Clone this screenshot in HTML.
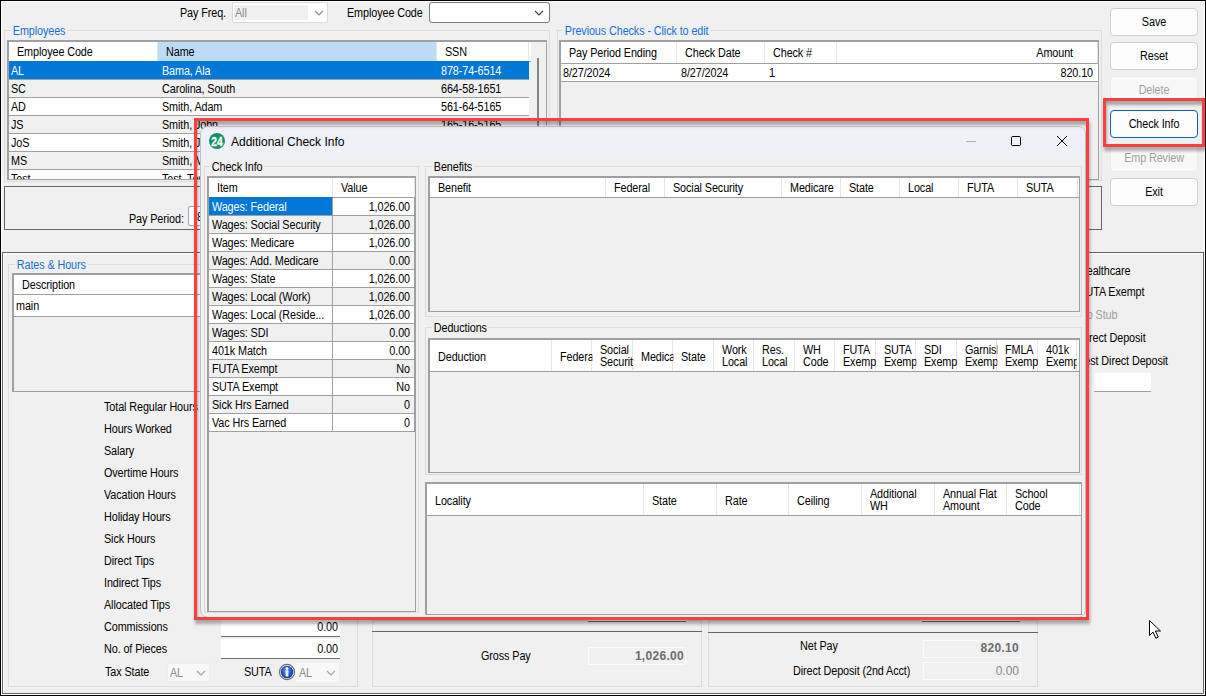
<!DOCTYPE html><html><head><meta charset="utf-8"><style>
*{margin:0;padding:0;box-sizing:border-box}
html,body{width:1206px;height:696px;overflow:hidden;background:#f0f0f0}
body{position:relative;font-family:"Liberation Sans",sans-serif;font-size:11px;color:#000}
.t{position:absolute;white-space:nowrap;line-height:13px;font-size:12px;letter-spacing:-0.1px;transform:scaleX(0.9);transform-origin:0 0}
.tr{transform-origin:100% 0}
.tc{transform-origin:50% 0}
.nt{transform:none}
.b{position:absolute}
.ib{position:absolute;overflow:hidden}
</style></head><body><!-- frame -->
<div class="b" style="left:0px;top:0px;width:1206px;height:696px;border:1px solid #000;"></div>
<div class="b" style="left:1px;top:1px;width:1204px;height:694px;border:1px solid #fff;"></div>
<div class="t " style="left:180px;top:7px;">Pay Freq.</div>
<div class="b" style="left:232px;top:2px;width:96px;height:21px;border:1px solid #d9d9d9;background:#fff;border-radius:2px"></div>
<div class="b" style="left:234px;top:5px;width:74px;height:15px;background:#f0f0f0"></div>
<div class="t " style="left:235px;top:7px;color:#8a8a8a">All</div>
<svg class="b" style="left:314px;top:10px" width="12" height="8"><path d="M1 1 L5 5 L9 1" fill="none" stroke="#8a8a8a" stroke-width="1.1"/></svg>
<div class="t " style="left:347px;top:7px;">Employee Code</div>
<div class="b" style="left:429px;top:2px;width:121px;height:21px;border:1px solid #7a7a7a;background:#fff;border-radius:3px"></div>
<svg class="b" style="left:534px;top:10px" width="12" height="8"><path d="M1 1 L5 5 L9 1" fill="none" stroke="#404040" stroke-width="1.1"/></svg>
<div class="b" style="left:4px;top:30px;width:546px;height:152px;border:1px solid #dcdcdc;"></div>
<div class="t" style="left:11px;top:25px;padding:0 2px;background:#f0f0f0;color:#1a6fd6">Employees</div>
<div class="ib" style="left:7px;top:40px;width:540px;height:140px;border-top:2px solid #a0a0a4;border-left:2px solid #a0a0a4;border-right:1px solid #a0a0a4;border-bottom:1px solid #a0a0a4;background:#f0f0f0">
<div class="b" style="left:0;top:0;width:540px;height:20px;background:#fff;border-bottom:1px solid #a0a0a0"></div>
<div class="b" style="left:148px;top:0;width:1px;height:19px;background:#e5e5e5"></div>
<div class="t" style="left:8px;top:4px;width:156.67px;overflow:hidden">Employee Code</div>
<div class="b" style="left:149px;top:0;width:279px;height:19px;background:#bcdcf4"></div>
<div class="b" style="left:427px;top:0;width:1px;height:19px;background:#e5e5e5"></div>
<div class="t" style="left:157px;top:4px;width:301.11px;overflow:hidden">Name</div>
<div class="b" style="left:519px;top:0;width:1px;height:19px;background:#e5e5e5"></div>
<div class="t" style="left:436px;top:4px;width:93.33px;overflow:hidden">SSN</div>
<div class="b" style="left:0;top:20px;width:520px;height:18px;background:#fff;border-bottom:1px solid #a0a0a0"></div>
<div class="b" style="left:0px;top:19px;width:149px;height:18px;background:#0078d7"></div>
<div class="t" style="left:2px;top:23px;width:161.11px;overflow:hidden;color:#fff">AL</div>
<div class="b" style="left:149px;top:19px;width:279px;height:18px;background:#0078d7"></div>
<div class="t" style="left:153px;top:23px;width:303.33px;overflow:hidden;color:#fff">Bama, Ala</div>
<div class="b" style="left:428px;top:19px;width:92px;height:18px;background:#0078d7"></div>
<div class="t" style="left:432px;top:23px;width:95.56px;overflow:hidden;color:#fff">878-74-6514</div>
<div class="b" style="left:0;top:38px;width:520px;height:18px;background:#f0f0f0;border-bottom:1px solid #a0a0a0"></div>
<div class="t" style="left:2px;top:41px;width:161.11px;overflow:hidden;color:#000">SC</div>
<div class="t" style="left:153px;top:41px;width:303.33px;overflow:hidden;color:#000">Carolina, South</div>
<div class="t" style="left:432px;top:41px;width:95.56px;overflow:hidden;color:#000">664-58-1651</div>
<div class="b" style="left:0;top:56px;width:520px;height:18px;background:#fff;border-bottom:1px solid #a0a0a0"></div>
<div class="t" style="left:2px;top:59px;width:161.11px;overflow:hidden;color:#000">AD</div>
<div class="t" style="left:153px;top:59px;width:303.33px;overflow:hidden;color:#000">Smith, Adam</div>
<div class="t" style="left:432px;top:59px;width:95.56px;overflow:hidden;color:#000">561-64-5165</div>
<div class="b" style="left:0;top:74px;width:520px;height:18px;background:#f0f0f0;border-bottom:1px solid #a0a0a0"></div>
<div class="t" style="left:2px;top:77px;width:161.11px;overflow:hidden;color:#000">JS</div>
<div class="t" style="left:153px;top:77px;width:303.33px;overflow:hidden;color:#000">Smith, John</div>
<div class="t" style="left:432px;top:77px;width:95.56px;overflow:hidden;color:#000">165-16-5165</div>
<div class="b" style="left:0;top:92px;width:520px;height:18px;background:#fff;border-bottom:1px solid #a0a0a0"></div>
<div class="t" style="left:2px;top:95px;width:161.11px;overflow:hidden;color:#000">JoS</div>
<div class="t" style="left:153px;top:95px;width:303.33px;overflow:hidden;color:#000">Smith, John</div>
<div class="t" style="left:432px;top:95px;width:95.56px;overflow:hidden;color:#000">165-16-5165</div>
<div class="b" style="left:0;top:110px;width:520px;height:18px;background:#f0f0f0;border-bottom:1px solid #a0a0a0"></div>
<div class="t" style="left:2px;top:113px;width:161.11px;overflow:hidden;color:#000">MS</div>
<div class="t" style="left:153px;top:113px;width:303.33px;overflow:hidden;color:#000">Smith, Mary</div>
<div class="t" style="left:432px;top:113px;width:95.56px;overflow:hidden;color:#000">165-16-5165</div>
<div class="b" style="left:0;top:128px;width:520px;height:18px;background:#fff;border-bottom:1px solid #a0a0a0"></div>
<div class="t" style="left:2px;top:131px;width:161.11px;overflow:hidden;color:#000">Test</div>
<div class="t" style="left:153px;top:131px;width:303.33px;overflow:hidden;color:#000">Test, Test</div>
<div class="t" style="left:432px;top:131px;width:95.56px;overflow:hidden;color:#000">165-16-5165</div>
</div>
<div class="b" style="left:531px;top:42px;width:15px;height:138px;background:#f0f0f0"></div>
<div class="b" style="left:537px;top:58px;width:2px;height:122px;background:#858585"></div>
<div class="b" style="left:557px;top:30px;width:545px;height:151px;border:1px solid #dcdcdc;"></div>
<div class="t" style="left:563px;top:25px;padding:0 2px;background:#f0f0f0;color:#1a6fd6">Previous Checks - Click to edit</div>
<div class="ib" style="left:559px;top:40px;width:540px;height:140px;border-top:2px solid #a0a0a4;border-left:2px solid #a0a0a4;border-right:1px solid #a0a0a4;border-bottom:1px solid #a0a0a4;background:#f0f0f0">
<div class="b" style="left:0;top:0;width:540px;height:22px;background:#fff;border-bottom:1px solid #a0a0a0"></div>
<div class="b" style="left:115px;top:0;width:1px;height:21px;background:#e5e5e5"></div>
<div class="t" style="left:8px;top:5px;width:120.00px;overflow:hidden">Pay Period Ending</div>
<div class="b" style="left:203px;top:0;width:1px;height:21px;background:#e5e5e5"></div>
<div class="t" style="left:124px;top:5px;width:88.89px;overflow:hidden">Check Date</div>
<div class="b" style="left:275px;top:0;width:1px;height:21px;background:#e5e5e5"></div>
<div class="t" style="left:212px;top:5px;width:71.11px;overflow:hidden">Check #</div>
<div class="b" style="left:536px;top:0;width:1px;height:21px;background:#e5e5e5"></div>
<div class="t tr" style="left:276px;top:5px;width:236px;text-align:right">Amount</div>
<div class="b" style="left:0;top:22px;width:537px;height:18px;background:#fff;border-bottom:1px solid #a0a0a0"></div>
<div class="t" style="left:2px;top:25px;width:124.44px;overflow:hidden;color:#000">8/27/2024</div>
<div class="t" style="left:120px;top:25px;width:91.11px;overflow:hidden;color:#000">8/27/2024</div>
<div class="t" style="left:208px;top:25px;width:73.33px;overflow:hidden;color:#000">1</div>
<div class="t tr" style="left:276px;top:25px;width:256px;text-align:right;color:#000">820.10</div>
</div>
<div class="b" style="left:1110px;top:8px;width:88px;height:28px;border:1px solid #d0d0d0;border-radius:4px;background:#fdfdfd"></div>
<div class="t tc" style="left:1110px;top:16px;width:88px;text-align:center">Save</div>
<div class="b" style="left:1110px;top:42px;width:88px;height:28px;border:1px solid #d0d0d0;border-radius:4px;background:#fdfdfd"></div>
<div class="t tc" style="left:1110px;top:50px;width:88px;text-align:center">Reset</div>
<div class="b" style="left:1110px;top:76px;width:88px;height:28px;border:1px solid #ebebeb;border-radius:4px;background:#f8f8f8"></div>
<div class="t tc" style="left:1110px;top:84px;width:88px;text-align:center;color:#a0a0a0">Delete</div>
<div class="b" style="left:1110px;top:110px;width:88px;height:28px;border:1.5px solid #0067c0;border-radius:4px;background:#fdfdfd"></div>
<div class="t tc" style="left:1110px;top:118px;width:88px;text-align:center">Check Info</div>
<div class="b" style="left:1110px;top:144px;width:88px;height:28px;border:1px solid #ebebeb;border-radius:4px;background:#f8f8f8"></div>
<div class="t tc" style="left:1110px;top:152px;width:88px;text-align:center;color:#a0a0a0">Emp Review</div>
<div class="b" style="left:1110px;top:178px;width:88px;height:28px;border:1px solid #d0d0d0;border-radius:4px;background:#fdfdfd"></div>
<div class="t tc" style="left:1110px;top:186px;width:88px;text-align:center">Exit</div>
<div class="b" style="left:4px;top:186px;width:1098px;height:44px;border:1px solid #646464;"></div>
<div class="t " style="left:129px;top:213px;">Pay Period:</div>
<div class="b" style="left:188px;top:206px;width:120px;height:20px;border:1px solid #a8a8a8;background:#fff;border-radius:2px"></div>
<div class="t " style="left:197px;top:211px;">8/27/2024</div>
<div class="b" style="left:2px;top:252px;width:1202px;height:442px;border:1px solid #646464;box-shadow:inset 1px 1px 0 #fff;"></div>
<div class="b" style="left:8px;top:264px;width:350px;height:423px;border:1px solid #dcdcdc;"></div>
<div class="t" style="left:15px;top:259px;padding:0 2px;background:#f0f0f0;color:#1a6fd6">Rates &amp; Hours</div>
<div class="ib" style="left:12px;top:273px;width:340px;height:119px;border-top:2px solid #a0a0a4;border-left:2px solid #a0a0a4;border-right:1px solid #a0a0a4;border-bottom:1px solid #a0a0a4;background:#f0f0f0">
<div class="b" style="left:0;top:0;width:340px;height:20px;background:#fff;border-bottom:1px solid #a0a0a0"></div>
<div class="b" style="left:339px;top:0;width:1px;height:19px;background:#e5e5e5"></div>
<div class="t" style="left:8px;top:4px;width:368.89px;overflow:hidden">Description</div>
<div class="b" style="left:0;top:20px;width:340px;height:22px;background:#fff;border-bottom:1px solid #a0a0a0"></div>
<div class="t" style="left:2px;top:25px;width:373.33px;overflow:hidden;color:#000">main</div>
</div>
<div class="t " style="left:104px;top:401px;">Total Regular Hours</div>
<div class="t " style="left:104px;top:423px;">Hours Worked</div>
<div class="t " style="left:104px;top:445px;">Salary</div>
<div class="t " style="left:104px;top:467px;">Overtime Hours</div>
<div class="t " style="left:104px;top:489px;">Vacation Hours</div>
<div class="t " style="left:104px;top:511px;">Holiday Hours</div>
<div class="t " style="left:104px;top:533px;">Sick Hours</div>
<div class="t " style="left:104px;top:555px;">Direct Tips</div>
<div class="t " style="left:104px;top:577px;">Indirect Tips</div>
<div class="t " style="left:104px;top:599px;">Allocated Tips</div>
<div class="t " style="left:104px;top:621px;">Commissions</div>
<div class="t " style="left:104px;top:643px;">No. of Pieces</div>
<div class="b" style="left:221px;top:397px;width:119px;height:20px;background:#fff;border-bottom:1px solid #6e6e6e"></div>
<div class="t tr " style="right:868px;top:401px;">0.00</div>
<div class="b" style="left:221px;top:419px;width:119px;height:20px;background:#fff;border-bottom:1px solid #6e6e6e"></div>
<div class="t tr " style="right:868px;top:423px;">0.00</div>
<div class="b" style="left:221px;top:441px;width:119px;height:20px;background:#fff;border-bottom:1px solid #6e6e6e"></div>
<div class="t tr " style="right:868px;top:445px;">0.00</div>
<div class="b" style="left:221px;top:463px;width:119px;height:20px;background:#fff;border-bottom:1px solid #6e6e6e"></div>
<div class="t tr " style="right:868px;top:467px;">0.00</div>
<div class="b" style="left:221px;top:485px;width:119px;height:20px;background:#fff;border-bottom:1px solid #6e6e6e"></div>
<div class="t tr " style="right:868px;top:489px;">0.00</div>
<div class="b" style="left:221px;top:507px;width:119px;height:20px;background:#fff;border-bottom:1px solid #6e6e6e"></div>
<div class="t tr " style="right:868px;top:511px;">0.00</div>
<div class="b" style="left:221px;top:529px;width:119px;height:20px;background:#fff;border-bottom:1px solid #6e6e6e"></div>
<div class="t tr " style="right:868px;top:533px;">0.00</div>
<div class="b" style="left:221px;top:551px;width:119px;height:20px;background:#fff;border-bottom:1px solid #6e6e6e"></div>
<div class="t tr " style="right:868px;top:555px;">0.00</div>
<div class="b" style="left:221px;top:573px;width:119px;height:20px;background:#fff;border-bottom:1px solid #6e6e6e"></div>
<div class="t tr " style="right:868px;top:577px;">0.00</div>
<div class="b" style="left:221px;top:595px;width:119px;height:20px;background:#fff;border-bottom:1px solid #6e6e6e"></div>
<div class="t tr " style="right:868px;top:599px;">0.00</div>
<div class="b" style="left:221px;top:617px;width:119px;height:20px;background:#fff;border-bottom:1px solid #6e6e6e"></div>
<div class="t tr " style="right:868px;top:621px;">0.00</div>
<div class="b" style="left:221px;top:639px;width:119px;height:20px;background:#fff;border-bottom:1px solid #6e6e6e"></div>
<div class="t tr " style="right:868px;top:643px;">0.00</div>
<div class="t " style="left:105px;top:666px;">Tax State</div>
<div class="b" style="left:167px;top:663px;width:43px;height:19px;background:#f8f8f8;border:1px solid #ededed"></div>
<div class="t " style="left:170px;top:667px;color:#8a8a8a">AL</div>
<svg class="b" style="left:196px;top:670px" width="12" height="8"><path d="M1 1 L5 5 L9 1" fill="none" stroke="#a0a0a0" stroke-width="1.1"/></svg>
<div class="t " style="left:244px;top:666px;">SUTA</div>
<svg class="b" style="left:278px;top:663px" width="18" height="18"><defs><radialGradient id="ig" cx="45%" cy="40%" r="60%"><stop offset="0" stop-color="#6e9cf0"/><stop offset="0.6" stop-color="#2a58c8"/><stop offset="1" stop-color="#1c3aa0"/></radialGradient></defs><circle cx="9" cy="9" r="7.6" fill="#e8e8e8" stroke="#707070" stroke-width="1.1"/><circle cx="9" cy="9" r="6.3" fill="url(#ig)"/><circle cx="9" cy="5.6" r="1.4" fill="#fff"/><rect x="7.6" y="7.4" width="2.8" height="6" fill="#fff"/></svg>
<div class="b" style="left:296px;top:663px;width:43px;height:19px;background:#f8f8f8"></div>
<div class="t " style="left:299px;top:667px;color:#8a8a8a">AL</div>
<svg class="b" style="left:326px;top:670px" width="12" height="8"><path d="M1 1 L5 5 L9 1" fill="none" stroke="#a0a0a0" stroke-width="1.1"/></svg>
<div class="b" style="left:372px;top:620px;width:330px;height:67px;border:1px solid #dcdcdc;"></div>
<div class="b" style="left:372px;top:631px;width:330px;height:1px;background:#646464"></div>
<div class="b" style="left:588px;top:607px;width:98px;height:15px;background:#fff;border-bottom:1px solid #646464"></div>
<div class="t " style="left:481px;top:650px;">Gross Pay</div>
<div class="b" style="left:588px;top:647px;width:98px;height:18px;border:1px solid #fafafa;background:#f0f0f0"></div>
<div class="t tr " style="right:522px;top:650px;font-weight:bold;color:#6d6d6d;font-size:12px;letter-spacing:0.3px;transform:none">1,026.00</div>
<div class="b" style="left:708px;top:620px;width:330px;height:67px;border:1px solid #dcdcdc;"></div>
<div class="b" style="left:708px;top:632px;width:330px;height:1px;background:#646464"></div>
<div class="b" style="left:922px;top:607px;width:98px;height:15px;background:#fff;border-bottom:1px solid #646464"></div>
<div class="t " style="left:800px;top:640px;">Net Pay</div>
<div class="b" style="left:923px;top:640px;width:98px;height:18px;border:1px solid #fafafa;background:#f0f0f0"></div>
<div class="t tr " style="right:187px;top:642px;font-weight:bold;color:#6d6d6d;font-size:12px;letter-spacing:0.3px;transform:none">820.10</div>
<div class="t " style="left:793px;top:665px;">Direct Deposit (2nd Acct)</div>
<div class="b" style="left:923px;top:662px;width:98px;height:18px;border:1px solid #fafafa;background:#f0f0f0"></div>
<div class="t tr " style="right:187px;top:665px;color:#8a8a8a;font-size:12px;letter-spacing:0;transform:none">0.00</div>
<div class="t " style="left:1079px;top:265px;">Healthcare</div>
<div class="t " style="left:1079px;top:286px;">FUTA Exempt</div>
<div class="t " style="left:1079px;top:309px;color:#a0a0a0">No Stub</div>
<div class="t " style="left:1079px;top:332px;">Direct Deposit</div>
<div class="t " style="left:1079px;top:355px;">Test Direct Deposit</div>
<div class="b" style="left:1094px;top:373px;width:57px;height:19px;background:#fff;border-bottom:1px solid #a0a0a0"></div>
<svg class="b" style="left:1148px;top:619px" width="16" height="22"><path d="M1.5 1.5 L1.5 16.5 L5 13 L7.8 19.2 L10.2 18.2 L7.5 12 L12.5 12 Z" fill="#fff" stroke="#000" stroke-width="1"/></svg>
<div class="ib" style="left:200px;top:126px;width:886px;height:492px;border:1px solid #c4c4c4;border-radius:8px;background:#f0f0f0">
<div class="b" style="left:0;top:0;width:886px;height:30px;background:linear-gradient(#e9eaf0,#eff1f8 4px)"></div>
</div>
<svg class="b" style="left:209px;top:133px" width="16" height="16"><circle cx="8" cy="8" r="8" fill="#11906a"/><text x="2.3" y="12.5" font-family="Liberation Sans" font-size="12.2" font-weight="bold" fill="#fff" stroke="#fff" stroke-width="0.3" textLength="11.4" lengthAdjust="spacingAndGlyphs">24</text></svg>
<div class="t" style="left:231px;top:136px;font-size:12px;letter-spacing:0;transform:none">Additional Check Info</div>
<div class="b" style="left:966px;top:141px;width:10px;height:1px;background:#b0b0b0"></div>
<div class="b" style="left:1011px;top:136px;width:10px;height:10px;border:1px solid #000;border-radius:1.5px"></div>
<svg class="b" style="left:1056px;top:135px" width="12" height="12"><path d="M1 1 L11 11 M11 1 L1 11" stroke="#000" stroke-width="1"/></svg>
<div class="b" style="left:204px;top:166px;width:215px;height:447px;border:1px solid #dcdcdc;"></div>
<div class="t" style="left:210px;top:161px;padding:0 2px;background:#f0f0f0;color:#000">Check Info</div>
<div class="ib" style="left:207px;top:176px;width:209px;height:436px;border-top:2px solid #a0a0a4;border-left:2px solid #a0a0a4;border-right:1px solid #a0a0a4;border-bottom:1px solid #a0a0a4;background:#f0f0f0">
<div class="b" style="left:0;top:0;width:209px;height:20px;background:#fff;border-bottom:1px solid #a0a0a0"></div>
<div class="b" style="left:123px;top:0;width:1px;height:19px;background:#e5e5e5"></div>
<div class="t" style="left:8px;top:4px;width:128.89px;overflow:hidden">Item</div>
<div class="b" style="left:205px;top:0;width:1px;height:19px;background:#e5e5e5"></div>
<div class="t" style="left:132px;top:4px;width:82.22px;overflow:hidden">Value</div>
<div class="b" style="left:0;top:20px;width:206px;height:18px;background:#fff;border-bottom:1px solid #a0a0a0"></div>
<div class="b" style="left:0px;top:19px;width:124px;height:18px;background:#0078d7"></div>
<div class="b" style="left:123px;top:20px;width:1px;height:18px;background:#a0a0a0"></div>
<div class="t" style="left:3px;top:23px;width:132.22px;overflow:hidden;color:#fff">Wages: Federal</div>
<div class="b" style="left:205px;top:20px;width:1px;height:18px;background:#a0a0a0"></div>
<div class="t tr" style="left:124px;top:23px;width:77px;text-align:right;color:#000">1,026.00</div>
<div class="b" style="left:0;top:38px;width:206px;height:18px;background:#f0f0f0;border-bottom:1px solid #a0a0a0"></div>
<div class="b" style="left:123px;top:38px;width:1px;height:18px;background:#a0a0a0"></div>
<div class="t" style="left:3px;top:41px;width:132.22px;overflow:hidden;color:#000">Wages: Social Security</div>
<div class="b" style="left:205px;top:38px;width:1px;height:18px;background:#a0a0a0"></div>
<div class="t tr" style="left:124px;top:41px;width:77px;text-align:right;color:#000">1,026.00</div>
<div class="b" style="left:0;top:56px;width:206px;height:18px;background:#fff;border-bottom:1px solid #a0a0a0"></div>
<div class="b" style="left:123px;top:56px;width:1px;height:18px;background:#a0a0a0"></div>
<div class="t" style="left:3px;top:59px;width:132.22px;overflow:hidden;color:#000">Wages: Medicare</div>
<div class="b" style="left:205px;top:56px;width:1px;height:18px;background:#a0a0a0"></div>
<div class="t tr" style="left:124px;top:59px;width:77px;text-align:right;color:#000">1,026.00</div>
<div class="b" style="left:0;top:74px;width:206px;height:18px;background:#f0f0f0;border-bottom:1px solid #a0a0a0"></div>
<div class="b" style="left:123px;top:74px;width:1px;height:18px;background:#a0a0a0"></div>
<div class="t" style="left:3px;top:77px;width:132.22px;overflow:hidden;color:#000">Wages: Add. Medicare</div>
<div class="b" style="left:205px;top:74px;width:1px;height:18px;background:#a0a0a0"></div>
<div class="t tr" style="left:124px;top:77px;width:77px;text-align:right;color:#000">0.00</div>
<div class="b" style="left:0;top:92px;width:206px;height:18px;background:#fff;border-bottom:1px solid #a0a0a0"></div>
<div class="b" style="left:123px;top:92px;width:1px;height:18px;background:#a0a0a0"></div>
<div class="t" style="left:3px;top:95px;width:132.22px;overflow:hidden;color:#000">Wages: State</div>
<div class="b" style="left:205px;top:92px;width:1px;height:18px;background:#a0a0a0"></div>
<div class="t tr" style="left:124px;top:95px;width:77px;text-align:right;color:#000">1,026.00</div>
<div class="b" style="left:0;top:110px;width:206px;height:18px;background:#f0f0f0;border-bottom:1px solid #a0a0a0"></div>
<div class="b" style="left:123px;top:110px;width:1px;height:18px;background:#a0a0a0"></div>
<div class="t" style="left:3px;top:113px;width:132.22px;overflow:hidden;color:#000">Wages: Local (Work)</div>
<div class="b" style="left:205px;top:110px;width:1px;height:18px;background:#a0a0a0"></div>
<div class="t tr" style="left:124px;top:113px;width:77px;text-align:right;color:#000">1,026.00</div>
<div class="b" style="left:0;top:128px;width:206px;height:18px;background:#fff;border-bottom:1px solid #a0a0a0"></div>
<div class="b" style="left:123px;top:128px;width:1px;height:18px;background:#a0a0a0"></div>
<div class="t" style="left:3px;top:131px;width:132.22px;overflow:hidden;color:#000">Wages: Local (Reside...</div>
<div class="b" style="left:205px;top:128px;width:1px;height:18px;background:#a0a0a0"></div>
<div class="t tr" style="left:124px;top:131px;width:77px;text-align:right;color:#000">1,026.00</div>
<div class="b" style="left:0;top:146px;width:206px;height:18px;background:#f0f0f0;border-bottom:1px solid #a0a0a0"></div>
<div class="b" style="left:123px;top:146px;width:1px;height:18px;background:#a0a0a0"></div>
<div class="t" style="left:3px;top:149px;width:132.22px;overflow:hidden;color:#000">Wages: SDI</div>
<div class="b" style="left:205px;top:146px;width:1px;height:18px;background:#a0a0a0"></div>
<div class="t tr" style="left:124px;top:149px;width:77px;text-align:right;color:#000">0.00</div>
<div class="b" style="left:0;top:164px;width:206px;height:18px;background:#fff;border-bottom:1px solid #a0a0a0"></div>
<div class="b" style="left:123px;top:164px;width:1px;height:18px;background:#a0a0a0"></div>
<div class="t" style="left:3px;top:167px;width:132.22px;overflow:hidden;color:#000">401k Match</div>
<div class="b" style="left:205px;top:164px;width:1px;height:18px;background:#a0a0a0"></div>
<div class="t tr" style="left:124px;top:167px;width:77px;text-align:right;color:#000">0.00</div>
<div class="b" style="left:0;top:182px;width:206px;height:18px;background:#f0f0f0;border-bottom:1px solid #a0a0a0"></div>
<div class="b" style="left:123px;top:182px;width:1px;height:18px;background:#a0a0a0"></div>
<div class="t" style="left:3px;top:185px;width:132.22px;overflow:hidden;color:#000">FUTA Exempt</div>
<div class="b" style="left:205px;top:182px;width:1px;height:18px;background:#a0a0a0"></div>
<div class="t tr" style="left:124px;top:185px;width:77px;text-align:right;color:#000">No</div>
<div class="b" style="left:0;top:200px;width:206px;height:18px;background:#fff;border-bottom:1px solid #a0a0a0"></div>
<div class="b" style="left:123px;top:200px;width:1px;height:18px;background:#a0a0a0"></div>
<div class="t" style="left:3px;top:203px;width:132.22px;overflow:hidden;color:#000">SUTA Exempt</div>
<div class="b" style="left:205px;top:200px;width:1px;height:18px;background:#a0a0a0"></div>
<div class="t tr" style="left:124px;top:203px;width:77px;text-align:right;color:#000">No</div>
<div class="b" style="left:0;top:218px;width:206px;height:18px;background:#f0f0f0;border-bottom:1px solid #a0a0a0"></div>
<div class="b" style="left:123px;top:218px;width:1px;height:18px;background:#a0a0a0"></div>
<div class="t" style="left:3px;top:221px;width:132.22px;overflow:hidden;color:#000">Sick Hrs Earned</div>
<div class="b" style="left:205px;top:218px;width:1px;height:18px;background:#a0a0a0"></div>
<div class="t tr" style="left:124px;top:221px;width:77px;text-align:right;color:#000">0</div>
<div class="b" style="left:0;top:236px;width:206px;height:18px;background:#fff;border-bottom:1px solid #a0a0a0"></div>
<div class="b" style="left:123px;top:236px;width:1px;height:18px;background:#a0a0a0"></div>
<div class="t" style="left:3px;top:239px;width:132.22px;overflow:hidden;color:#000">Vac Hrs Earned</div>
<div class="b" style="left:205px;top:236px;width:1px;height:18px;background:#a0a0a0"></div>
<div class="t tr" style="left:124px;top:239px;width:77px;text-align:right;color:#000">0</div>
</div>
<div class="b" style="left:425px;top:166px;width:657px;height:151px;border:1px solid #dcdcdc;"></div>
<div class="t" style="left:432px;top:161px;padding:0 2px;background:#f0f0f0;color:#000">Benefits</div>
<div class="ib" style="left:428px;top:176px;width:652px;height:136px;border-top:2px solid #a0a0a4;border-left:2px solid #a0a0a4;border-right:1px solid #a0a0a4;border-bottom:1px solid #a0a0a4;background:#f0f0f0">
<div class="b" style="left:0;top:0;width:652px;height:20px;background:#fff;border-bottom:1px solid #a0a0a0"></div>
<div class="b" style="left:175px;top:0;width:1px;height:19px;background:#e5e5e5"></div>
<div class="t" style="left:8px;top:4px;width:186.67px;overflow:hidden">Benefit</div>
<div class="b" style="left:234px;top:0;width:1px;height:19px;background:#e5e5e5"></div>
<div class="t" style="left:184px;top:4px;width:56.67px;overflow:hidden">Federal</div>
<div class="b" style="left:351px;top:0;width:1px;height:19px;background:#e5e5e5"></div>
<div class="t" style="left:243px;top:4px;width:121.11px;overflow:hidden">Social Security</div>
<div class="b" style="left:410px;top:0;width:1px;height:19px;background:#e5e5e5"></div>
<div class="t" style="left:360px;top:4px;width:56.67px;overflow:hidden">Medicare</div>
<div class="b" style="left:469px;top:0;width:1px;height:19px;background:#e5e5e5"></div>
<div class="t" style="left:419px;top:4px;width:56.67px;overflow:hidden">State</div>
<div class="b" style="left:528px;top:0;width:1px;height:19px;background:#e5e5e5"></div>
<div class="t" style="left:478px;top:4px;width:56.67px;overflow:hidden">Local</div>
<div class="b" style="left:587px;top:0;width:1px;height:19px;background:#e5e5e5"></div>
<div class="t" style="left:537px;top:4px;width:56.67px;overflow:hidden">FUTA</div>
<div class="b" style="left:647px;top:0;width:1px;height:19px;background:#e5e5e5"></div>
<div class="t" style="left:596px;top:4px;width:57.78px;overflow:hidden">SUTA</div>
</div>
<div class="b" style="left:425px;top:327px;width:657px;height:148px;border:1px solid #dcdcdc;"></div>
<div class="t" style="left:432px;top:322px;padding:0 2px;background:#f0f0f0;color:#000">Deductions</div>
<div class="ib" style="left:428px;top:338px;width:652px;height:135px;border-top:2px solid #a0a0a4;border-left:2px solid #a0a0a4;border-right:1px solid #a0a0a4;border-bottom:1px solid #a0a0a4;background:#f0f0f0">
<div class="b" style="left:0;top:0;width:652px;height:32px;background:#fff;border-bottom:1px solid #a0a0a0"></div>
<div class="b" style="left:121px;top:0;width:1px;height:31px;background:#e5e5e5"></div>
<div class="t" style="left:8px;top:10.5px;width:126.67px;overflow:hidden">Deduction</div>
<div class="b" style="left:161px;top:0;width:1px;height:31px;background:#e5e5e5"></div>
<div class="t" style="left:130px;top:10.5px;width:35.56px;overflow:hidden">Federal</div>
<div class="b" style="left:202px;top:0;width:1px;height:31px;background:#e5e5e5"></div>
<div class="t" style="left:170px;top:3.5px;width:36.67px;overflow:hidden;line-height:12.5px">Social<br>Security</div>
<div class="b" style="left:242px;top:0;width:1px;height:31px;background:#e5e5e5"></div>
<div class="t" style="left:211px;top:10.5px;width:35.56px;overflow:hidden">Medicare</div>
<div class="b" style="left:283px;top:0;width:1px;height:31px;background:#e5e5e5"></div>
<div class="t" style="left:251px;top:10.5px;width:36.67px;overflow:hidden">State</div>
<div class="b" style="left:323px;top:0;width:1px;height:31px;background:#e5e5e5"></div>
<div class="t" style="left:292px;top:3.5px;width:35.56px;overflow:hidden;line-height:12.5px">Work<br>Local</div>
<div class="b" style="left:364px;top:0;width:1px;height:31px;background:#e5e5e5"></div>
<div class="t" style="left:332px;top:3.5px;width:36.67px;overflow:hidden;line-height:12.5px">Res.<br>Local</div>
<div class="b" style="left:404px;top:0;width:1px;height:31px;background:#e5e5e5"></div>
<div class="t" style="left:373px;top:3.5px;width:35.56px;overflow:hidden;line-height:12.5px">WH<br>Code</div>
<div class="b" style="left:445px;top:0;width:1px;height:31px;background:#e5e5e5"></div>
<div class="t" style="left:413px;top:3.5px;width:36.67px;overflow:hidden;line-height:12.5px">FUTA<br>Exempt</div>
<div class="b" style="left:485px;top:0;width:1px;height:31px;background:#e5e5e5"></div>
<div class="t" style="left:454px;top:3.5px;width:35.56px;overflow:hidden;line-height:12.5px">SUTA<br>Exempt</div>
<div class="b" style="left:526px;top:0;width:1px;height:31px;background:#e5e5e5"></div>
<div class="t" style="left:494px;top:3.5px;width:36.67px;overflow:hidden;line-height:12.5px">SDI<br>Exempt</div>
<div class="b" style="left:566px;top:0;width:1px;height:31px;background:#e5e5e5"></div>
<div class="t" style="left:535px;top:3.5px;width:35.56px;overflow:hidden;line-height:12.5px">Garnish<br>Exempt</div>
<div class="b" style="left:607px;top:0;width:1px;height:31px;background:#e5e5e5"></div>
<div class="t" style="left:575px;top:3.5px;width:36.67px;overflow:hidden;line-height:12.5px">FMLA<br>Exempt</div>
<div class="b" style="left:646px;top:0;width:1px;height:31px;background:#e5e5e5"></div>
<div class="t" style="left:616px;top:3.5px;width:34.44px;overflow:hidden;line-height:12.5px">401k<br>Exempt</div>
</div>
<div class="ib" style="left:425px;top:482px;width:657px;height:133px;border-top:2px solid #a0a0a4;border-left:2px solid #a0a0a4;border-right:1px solid #a0a0a4;border-bottom:1px solid #a0a0a4;background:#f0f0f0">
<div class="b" style="left:0;top:0;width:657px;height:32px;background:#fff;border-bottom:1px solid #a0a0a0"></div>
<div class="b" style="left:216px;top:0;width:1px;height:31px;background:#e5e5e5"></div>
<div class="t" style="left:8px;top:10.5px;width:232.22px;overflow:hidden">Locality</div>
<div class="b" style="left:289px;top:0;width:1px;height:31px;background:#e5e5e5"></div>
<div class="t" style="left:225px;top:10.5px;width:72.22px;overflow:hidden">State</div>
<div class="b" style="left:361px;top:0;width:1px;height:31px;background:#e5e5e5"></div>
<div class="t" style="left:298px;top:10.5px;width:71.11px;overflow:hidden">Rate</div>
<div class="b" style="left:434px;top:0;width:1px;height:31px;background:#e5e5e5"></div>
<div class="t" style="left:370px;top:10.5px;width:72.22px;overflow:hidden">Ceiling</div>
<div class="b" style="left:507px;top:0;width:1px;height:31px;background:#e5e5e5"></div>
<div class="t" style="left:443px;top:3.5px;width:72.22px;overflow:hidden;line-height:12.5px">Additional<br>WH</div>
<div class="b" style="left:579px;top:0;width:1px;height:31px;background:#e5e5e5"></div>
<div class="t" style="left:516px;top:3.5px;width:71.11px;overflow:hidden;line-height:12.5px">Annual Flat<br>Amount</div>
<div class="b" style="left:652px;top:0;width:1px;height:31px;background:#e5e5e5"></div>
<div class="t" style="left:588px;top:3.5px;width:72.22px;overflow:hidden;line-height:12.5px">School<br>Code</div>
</div>
<div class="b" style="left:194px;top:118px;width:895px;height:502px;border:3px solid #fb3f3f;box-shadow:1px 4px 3px rgba(0,0,0,.3), inset 1px 4px 3px rgba(0,0,0,.3)"></div>
<div class="b" style="left:1103px;top:98px;width:102px;height:49px;border:3px solid #fb3f3f;box-shadow:1px 4px 3px rgba(0,0,0,.3), inset 1px 4px 3px rgba(0,0,0,.3)"></div></body></html>
